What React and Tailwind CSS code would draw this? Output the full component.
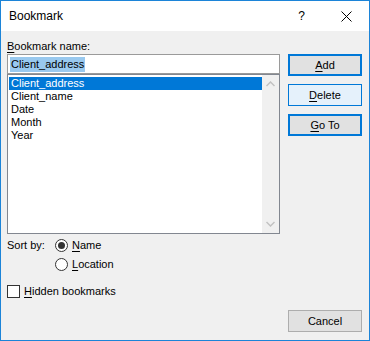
import React from "react";

const items = ["Client_address", "Client_name", "Date", "Month", "Year"];

function Key({ children }) {
  return <span className="underline underline-offset-[2px]">{children}</span>;
}

function Radio({ checked, label }) {
  return (
    <div className="flex items-center h-[13px]">
      <div className="w-[13px] h-[13px] rounded-full border border-[#333333] bg-white flex items-center justify-center">
        {checked && <div className="w-[7px] h-[7px] rounded-full bg-[#333333]" />}
      </div>
      <span className="ml-[4px] leading-[13px]">{label}</span>
    </div>
  );
}

export default function App() {
  return (
    <div
      className="w-[370px] h-[341px] border border-[#1c84d8] flex flex-col text-black text-[11px]"
      style={{ fontFamily: '"Liberation Sans", Arial, sans-serif' }}
    >
      {/* Title bar */}
      <div className="h-[30px] bg-white flex items-center pl-[8px] pr-[17px]">
        <span className="text-[12px]">Bookmark</span>
        <div className="ml-auto flex items-center gap-[36px]">
          <span className="text-[12px]">?</span>
          <svg width="11" height="11" viewBox="0 0 11 11">
            <path d="M0.5 0.5 L10.5 10.5 M10.5 0.5 L0.5 10.5" stroke="#000" strokeWidth="1" />
          </svg>
        </div>
      </div>

      {/* Body */}
      <div className="flex-1 bg-[#f0f0f0] flex flex-col pl-[6px] pr-[7px] pb-[8px]">
        <div className="flex">
          {/* Left column */}
          <div className="w-[273px] flex flex-col">
            <div className="mt-[8px] h-[15px] leading-[15px]">
              <Key>B</Key>ookmark name:
            </div>
            <div className="h-[20px] border border-[#9a9a9a] bg-white flex items-center pl-[2px]">
              <span className="bg-[#99c9ef] px-[1px] leading-[15px]">Client_address</span>
            </div>
            <div className="h-[160px] border border-[#828790] bg-white flex">
              <div className="flex-1 pt-[2px] pl-[1px]">
                {items.map((it, i) => (
                  <div
                    key={it}
                    className={
                      "h-[13px] leading-[13px] pl-[2px] " +
                      (i === 0 ? "bg-[#0078d7] text-white" : "")
                    }
                  >
                    {it}
                  </div>
                ))}
              </div>
              <div className="w-[17px] bg-[#f0f0f0] flex flex-col items-center justify-between py-[6px]">
                <svg width="9" height="6" viewBox="0 0 9 6">
                  <path d="M0.5 5 L4.5 1 L8.5 5" fill="none" stroke="#c2c2c2" strokeWidth="1.5" />
                </svg>
                <svg width="9" height="6" viewBox="0 0 9 6">
                  <path d="M0.5 1 L4.5 5 L8.5 1" fill="none" stroke="#c2c2c2" strokeWidth="1.5" />
                </svg>
              </div>
            </div>

            {/* Sort by */}
            <div className="mt-[5px] flex">
              <div className="w-[48px] leading-[13px]">Sort by:</div>
              <div className="flex flex-col gap-[6px]">
                <Radio checked label={<><Key>N</Key>ame</>} />
                <Radio label={<><Key>L</Key>ocation</>} />
              </div>
            </div>

            {/* Hidden bookmarks */}
            <div className="mt-[14px] flex items-center">
              <div className="w-[13px] h-[13px] border border-[#333333] bg-white" />
              <span className="ml-[4px] leading-[13px]">
                <Key>H</Key>idden bookmarks
              </span>
            </div>
          </div>

          {/* Right column */}
          <div className="ml-[8px] w-[74px] flex flex-col gap-[8px] pt-[23px]">
            <button className="h-[22px] border-2 border-[#0078d7] bg-[#e1e1e1]">
              <Key>A</Key>dd
            </button>
            <button className="h-[22px] border border-[#0078d7] bg-[#e5f1fb]">
              <Key>D</Key>elete
            </button>
            <button className="h-[22px] border-2 border-[#0078d7] bg-[#e1e1e1]">
              <Key>G</Key>o To
            </button>
          </div>
        </div>

        <div className="mt-auto flex justify-end">
          <button className="w-[74px] h-[22px] border border-[#adadad] bg-[#e1e1e1]">
            Cancel
          </button>
        </div>
      </div>
    </div>
  );
}
